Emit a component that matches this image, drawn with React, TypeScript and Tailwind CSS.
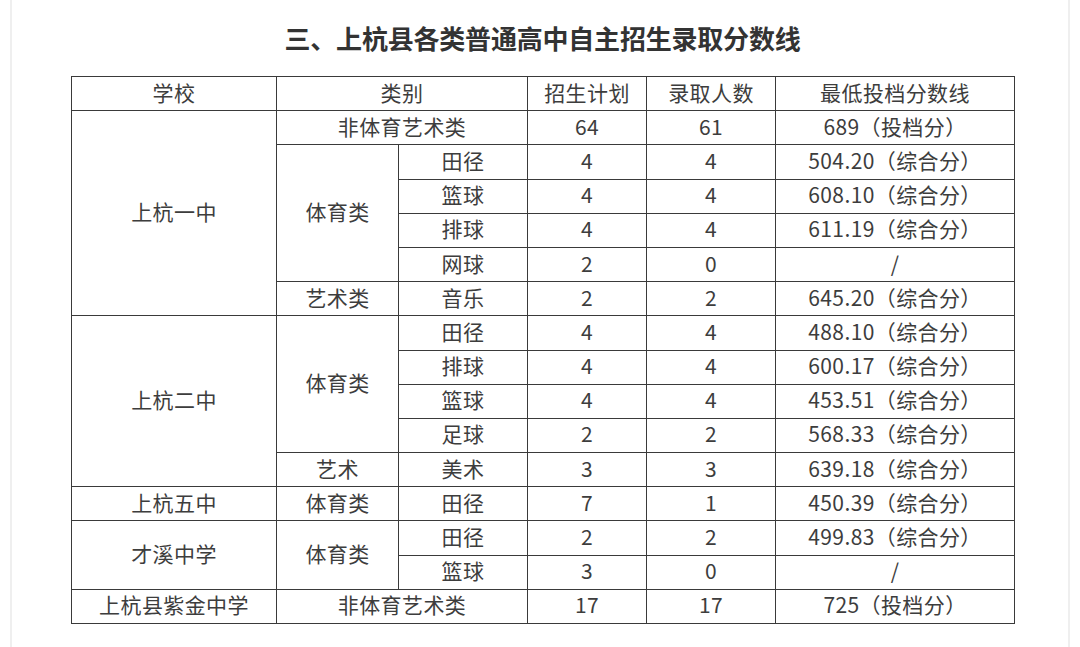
type Row = {
  school?: { name: string; span: number }
  cat?: { name: string; span: number; wide?: boolean }
  item?: string
  plan: string
  admit: string
  score: string
}

const rows: Row[] = [
  { school: { name: '上杭一中', span: 6 }, cat: { name: '非体育艺术类', span: 1, wide: true }, plan: '64', admit: '61', score: '689（投档分）' },
  { cat: { name: '体育类', span: 4 }, item: '田径', plan: '4', admit: '4', score: '504.20（综合分）' },
  { item: '篮球', plan: '4', admit: '4', score: '608.10（综合分）' },
  { item: '排球', plan: '4', admit: '4', score: '611.19（综合分）' },
  { item: '网球', plan: '2', admit: '0', score: '/' },
  { cat: { name: '艺术类', span: 1 }, item: '音乐', plan: '2', admit: '2', score: '645.20（综合分）' },
  { school: { name: '上杭二中', span: 5 }, cat: { name: '体育类', span: 4 }, item: '田径', plan: '4', admit: '4', score: '488.10（综合分）' },
  { item: '排球', plan: '4', admit: '4', score: '600.17（综合分）' },
  { item: '篮球', plan: '4', admit: '4', score: '453.51（综合分）' },
  { item: '足球', plan: '2', admit: '2', score: '568.33（综合分）' },
  { cat: { name: '艺术', span: 1 }, item: '美术', plan: '3', admit: '3', score: '639.18（综合分）' },
  { school: { name: '上杭五中', span: 1 }, cat: { name: '体育类', span: 1 }, item: '田径', plan: '7', admit: '1', score: '450.39（综合分）' },
  { school: { name: '才溪中学', span: 2 }, cat: { name: '体育类', span: 2 }, item: '田径', plan: '2', admit: '2', score: '499.83（综合分）' },
  { item: '篮球', plan: '3', admit: '0', score: '/' },
  { school: { name: '上杭县紫金中学', span: 1 }, cat: { name: '非体育艺术类', span: 1, wide: true }, plan: '17', admit: '17', score: '725（投档分）' },
]

const cell = 'border-[1.5px] border-[#3a3a3a] text-center align-middle px-0 pt-0 pb-[3px] leading-none'

export default function App() {
  return (
    <div
      className="w-[1080px] h-[647px] bg-white px-[10px] overflow-hidden"
      style={{ fontFamily: '"Noto Sans CJK SC", "Noto Sans", sans-serif' }}
    >
      <div className="h-full border-x-2 border-[#efefef] flex flex-col">
        {/* 标题 */}
        <h1 className="mt-[20px] h-[36px] leading-[36px] text-[26px] font-bold text-[#333] text-center pl-[5px] tracking-[-0.2px]">
          三、上杭县各类普通高中自主招生录取分数线
        </h1>

        <table className="mt-[20px] ml-[59px] w-[943px] table-fixed border-collapse text-[21px] tracking-[0.4px] text-[#3d3d3d]">
          <colgroup>
            <col className="w-[205px]" />
            <col className="w-[122px]" />
            <col className="w-[129px]" />
            <col className="w-[119px]" />
            <col className="w-[129px]" />
            <col className="w-[239px]" />
          </colgroup>
          <thead>
            <tr className="h-[34.2px]">
              <th className={`${cell} font-normal`}>学校</th>
              <th className={`${cell} font-normal`} colSpan={2}>类别</th>
              <th className={`${cell} font-normal`}>招生计划</th>
              <th className={`${cell} font-normal`}>录取人数</th>
              <th className={`${cell} font-normal`}>最低投档分数线</th>
            </tr>
          </thead>
          <tbody>
            {rows.map((r, i) => (
              <tr key={i} className="h-[34.2px]">
                {r.school && (
                  <td className={cell} rowSpan={r.school.span}>{r.school.name}</td>
                )}
                {r.cat && (
                  <td className={cell} rowSpan={r.cat.span} colSpan={r.cat.wide ? 2 : 1}>
                    {r.cat.name}
                  </td>
                )}
                {r.item && <td className={cell}>{r.item}</td>}
                <td className={cell}>{r.plan}</td>
                <td className={cell}>{r.admit}</td>
                <td className={cell}>{r.score}</td>
              </tr>
            ))}
          </tbody>
        </table>
      </div>
    </div>
  )
}
